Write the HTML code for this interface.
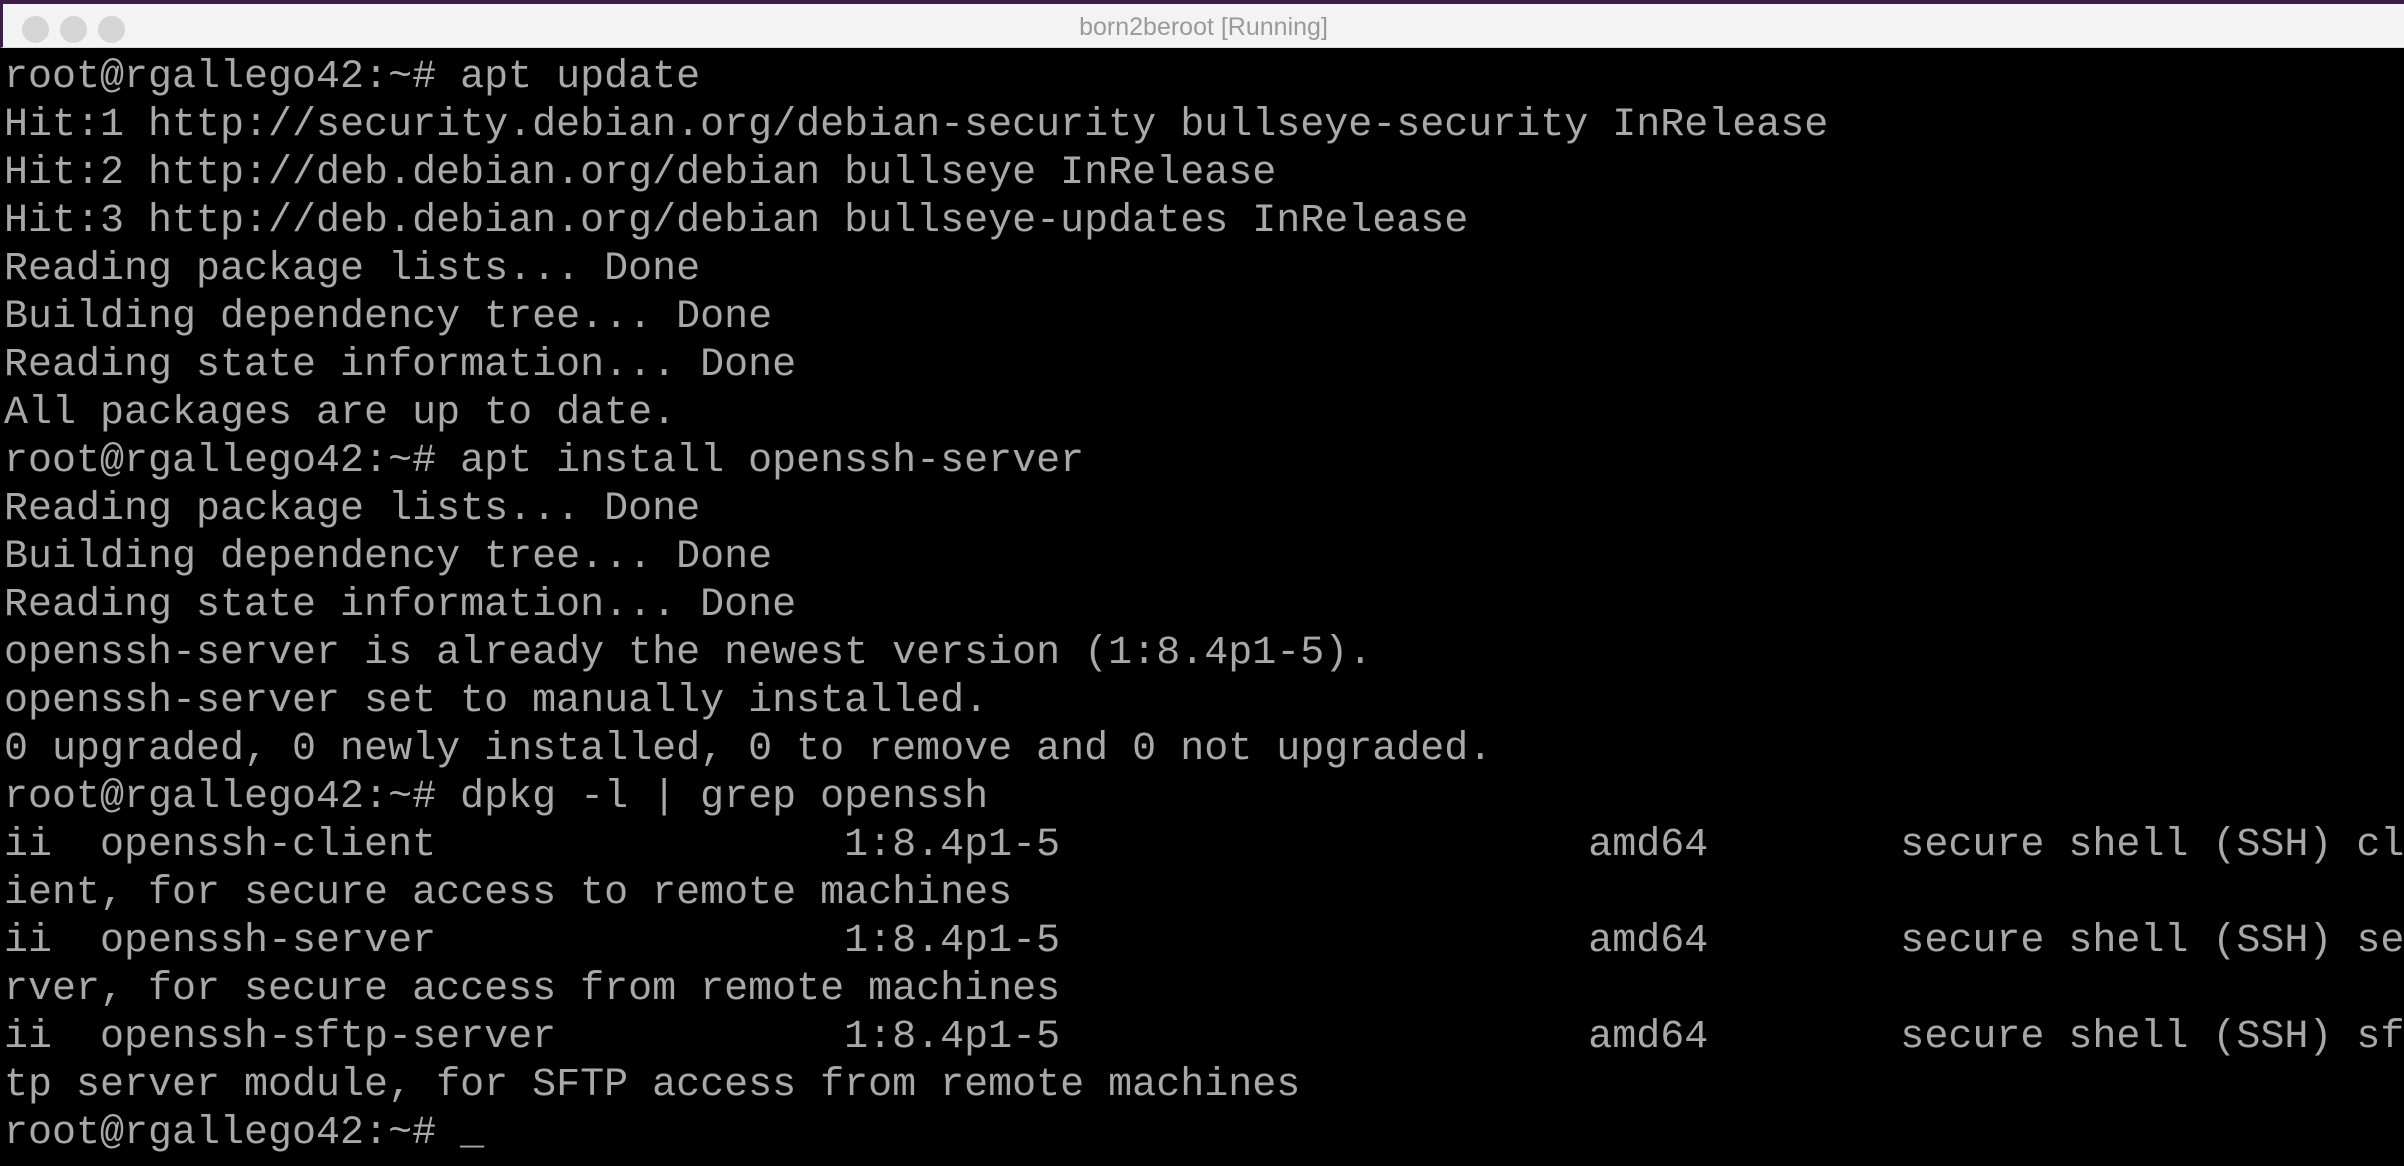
<!DOCTYPE html>
<html><head><meta charset="utf-8"><style>
html,body{margin:0;padding:0;}
body{width:2404px;height:1166px;background:#000;overflow:hidden;position:relative;}
.border{position:absolute;left:0;top:0;width:2404px;height:4px;background:#3b1d4a;}
.bar{position:absolute;left:0;top:4px;width:2404px;height:44px;background:#f3f3f3;border-left:3px solid #3b1d4a;box-sizing:border-box;border-bottom:1px solid #d8d8d8;}
.dot{position:absolute;top:12px;width:27px;height:27px;border-radius:50%;background:#d5d5d5;}
.title{position:absolute;left:0;right:0;top:9px;text-align:center;font-family:"Liberation Sans",sans-serif;font-size:25px;color:#9a9a9a;}
pre{position:absolute;left:4px;top:54px;margin:0;font-family:"Liberation Mono",monospace;font-size:40px;line-height:48px;color:#a8a8a8;white-space:pre;width:2400px;overflow:hidden;}
</style></head><body>
<div class="border"></div>
<div class="bar"><div class="dot" style="left:19px"></div><div class="dot" style="left:57px"></div><div class="dot" style="left:95px"></div><div class="title">born2beroot [Running]</div></div>
<pre>root@rgallego42:~# apt update
Hit:1 http://security.debian.org/debian-security bullseye-security InRelease
Hit:2 http://deb.debian.org/debian bullseye InRelease
Hit:3 http://deb.debian.org/debian bullseye-updates InRelease
Reading package lists... Done
Building dependency tree... Done
Reading state information... Done
All packages are up to date.
root@rgallego42:~# apt install openssh-server
Reading package lists... Done
Building dependency tree... Done
Reading state information... Done
openssh-server is already the newest version (1:8.4p1-5).
openssh-server set to manually installed.
0 upgraded, 0 newly installed, 0 to remove and 0 not upgraded.
root@rgallego42:~# dpkg -l | grep openssh
ii  openssh-client                 1:8.4p1-5                      amd64        secure shell (SSH) cl
ient, for secure access to remote machines
ii  openssh-server                 1:8.4p1-5                      amd64        secure shell (SSH) se
rver, for secure access from remote machines
ii  openssh-sftp-server            1:8.4p1-5                      amd64        secure shell (SSH) sf
tp server module, for SFTP access from remote machines
root@rgallego42:~# _</pre>
</body></html>
